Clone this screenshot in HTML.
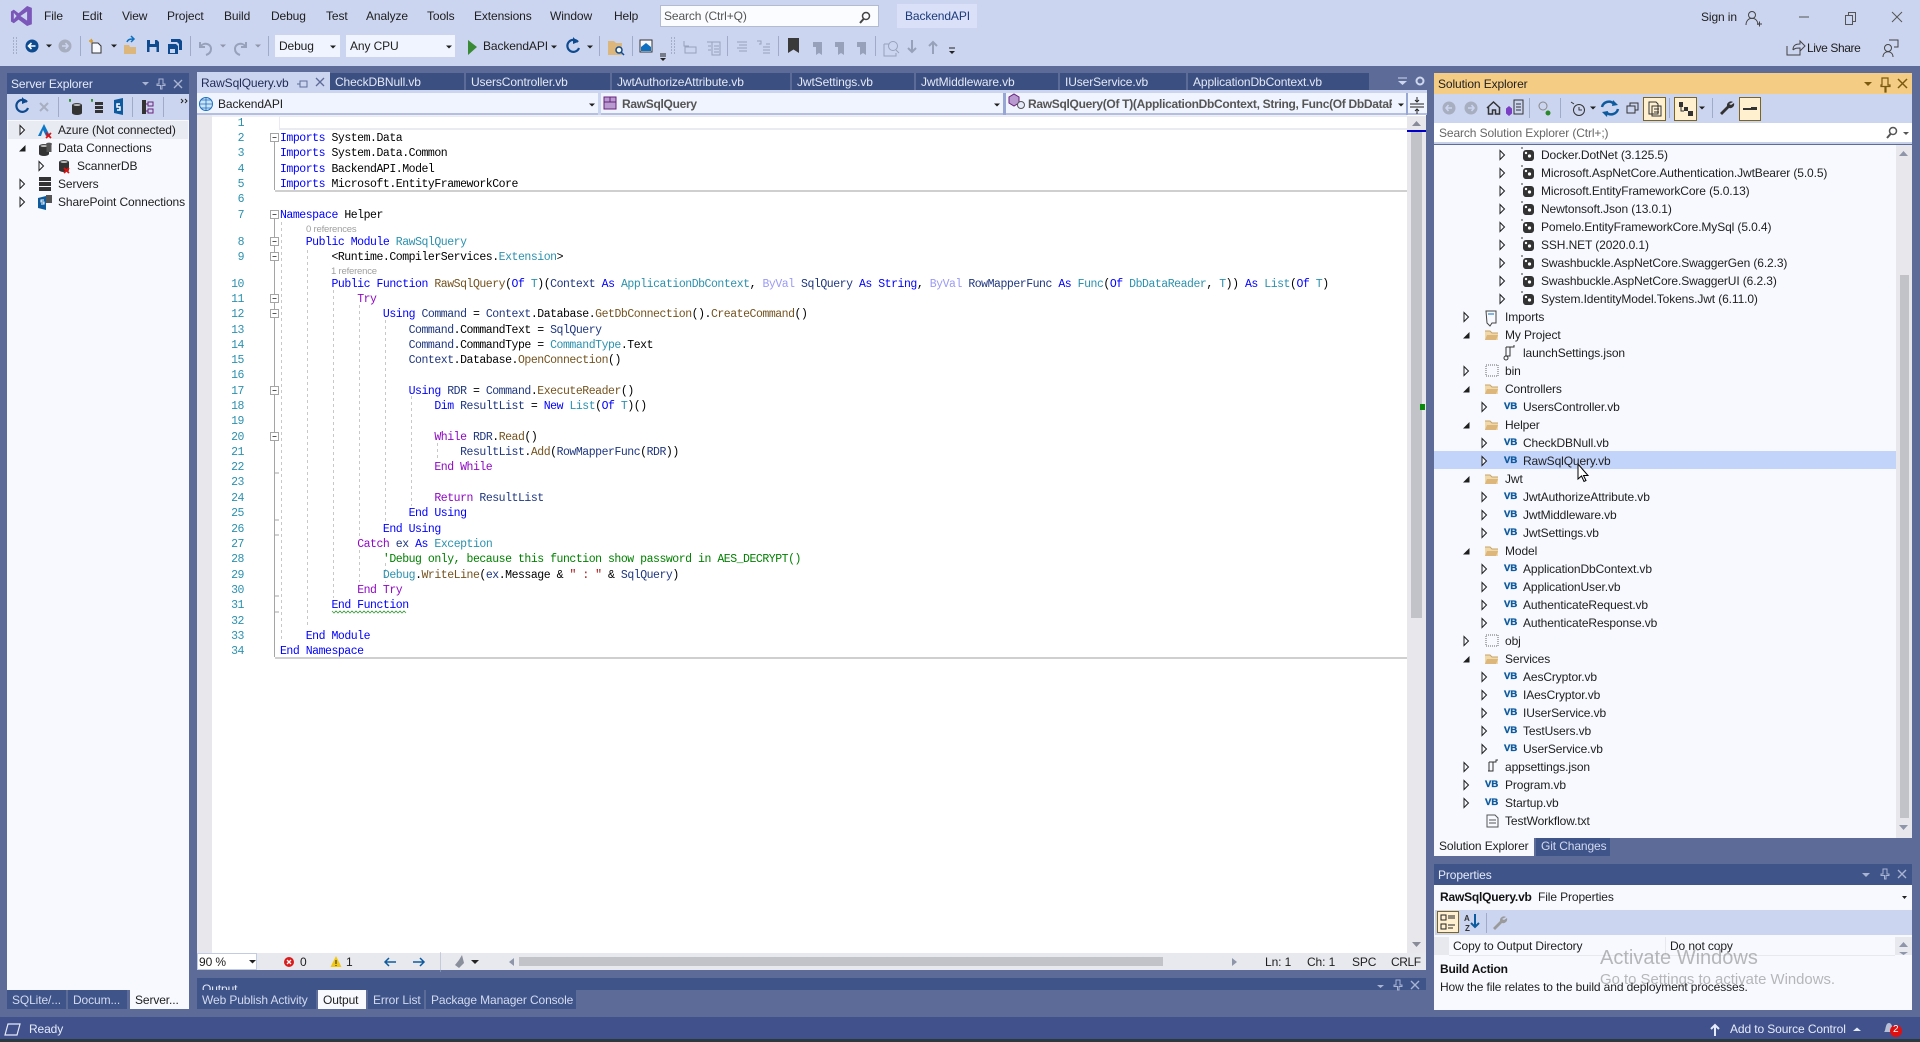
<!DOCTYPE html>
<html><head><meta charset="utf-8"><title>BackendAPI</title>
<style>
html,body{margin:0;padding:0;width:1920px;height:1042px;overflow:hidden;background:#5d6b99}
*{box-sizing:border-box}
body{font:12px/16px "Liberation Sans",sans-serif;letter-spacing:-.11px;color:#1e1e1e;position:relative}
.r{position:absolute}
.t{position:absolute;white-space:nowrap;line-height:16px}
.w{color:#e6ebfa}
.tab{position:absolute;top:73px;height:17px;background:#3b4f81;color:#e4e9f8;line-height:19px;padding-left:5px;white-space:nowrap;overflow:hidden}
.bt{position:absolute;top:990px;height:19px;background:#3f5489;color:#d3daf0;line-height:21px;padding-left:5px;white-space:nowrap;overflow:hidden}
.ln{position:absolute;width:47px;left:197px;text-align:right;font:11.5px/16px "Liberation Mono",monospace;letter-spacing:-.465px;color:#2b91af;margin-top:2px}
.c{position:absolute;left:280px;white-space:pre;font:11.5px/16px "Liberation Mono",monospace;letter-spacing:-.47px;color:#000;margin-top:2px}
.k{color:#00f}.p{color:#8f08c4}.v{color:#1f377f}.m{color:#74531f}.y{color:#2b91af}.g{color:#008000}.f{color:#9a9af5}.s{color:#a31515}
.ref{position:absolute;font-size:9.5px;line-height:12px;color:#a0a0a0;letter-spacing:-.2px;white-space:nowrap;margin-top:1px}
#tree{position:absolute;left:1434px;top:146px;width:462px;font-size:12px}
#tree div{height:18px;line-height:18px;white-space:nowrap}
.l2{padding-left:71px}.l3{padding-left:89px}.l4{padding-left:107px}
#srv{position:absolute;left:8px;top:121px;width:180px}
#srv div{height:18px;line-height:18px;white-space:nowrap;padding-left:50px}
svg{position:absolute;left:0;top:0}
</style></head><body>
<!-- chrome -->
<div class="r" style="left:0;top:0;width:1920px;height:66px;background:#ccd5f0"></div>
<!-- search + badge -->
<div class="r" style="left:660px;top:5px;width:219px;height:22px;background:#fbfcff;border:1px solid #b4bbd0"></div>
<div class="r" style="left:897px;top:4px;width:80px;height:24px;background:#d9e0f8"></div>
<div class="r" style="left:275px;top:35px;width:65px;height:22px;background:#f0f4fe"></div>
<div class="r" style="left:346px;top:35px;width:109px;height:22px;background:#f0f4fe"></div>
<!-- server explorer -->
<div class="r" style="left:7px;top:73px;width:182px;height:21px;background:#3f5489"></div>
<div class="r" style="left:7px;top:94px;width:182px;height:26px;background:#ccd5f0"></div>
<div class="r" style="left:7px;top:120px;width:182px;height:870px;background:#f7f9fe"></div>
<div class="r" style="left:8px;top:121px;width:180px;height:18px;background:#e9ebf2"></div>
<div class="bt" style="left:7px;width:59px">SQLite/...</div>
<div class="bt" style="left:68px;width:59px">Docum...</div>
<div class="bt" style="left:130px;width:59px;background:#f7f9fe;color:#1e1e1e">Server...</div>
<!-- editor -->
<div class="r" style="left:197px;top:90px;width:1230px;height:3px;background:#ccd5f0"></div>
<div class="r" style="left:197px;top:72px;width:133px;height:19px;background:#ccd5f0"></div>
<div class="tab" style="left:330px;width:134px">CheckDBNull.vb</div>
<div class="tab" style="left:466px;width:144px">UsersController.vb</div>
<div class="tab" style="left:612px;width:178px">JwtAuthorizeAttribute.vb</div>
<div class="tab" style="left:792px;width:122px">JwtSettings.vb</div>
<div class="tab" style="left:916px;width:142px">JwtMiddleware.vb</div>
<div class="tab" style="left:1060px;width:126px">IUserService.vb</div>
<div class="tab" style="left:1188px;width:181px">ApplicationDbContext.vb</div>
<div class="r" style="left:197px;top:93px;width:1230px;height:22px;background:#f0f4fe;border-bottom:2px solid #b3bee0"></div>
<div class="r" style="left:598px;top:93px;width:3px;height:22px;background:#ccd5f0"></div>
<div class="r" style="left:1003px;top:93px;width:3px;height:22px;background:#98a6d4"></div>
<div class="r" style="left:1406px;top:93px;width:2px;height:22px;background:#98a6d4"></div>
<div class="r" style="left:197px;top:115px;width:1229px;height:838px;background:#fff"></div>
<div class="r" style="left:197px;top:115px;width:15px;height:838px;background:#e8e8ec"></div>
<div class="r" style="left:212px;top:115px;width:1195px;height:2px;background:#eef0f6"></div>
<div class="r" style="left:279px;top:116px;width:1128px;height:14px;background:#fff;border-bottom:2px solid #eaeaf2;border-left:1px solid #eaeaf2;border-top:1px solid #eaeaf2"></div>
<div class="r" style="left:275px;top:190px;width:1132px;height:2px;background:#cfcfcf"></div>
<div class="r" style="left:275px;top:657px;width:1132px;height:2px;background:#cfcfcf"></div>
<!-- editor scrollbar -->
<div class="r" style="left:1407px;top:116px;width:19px;height:837px;background:#e8e8ec"></div>
<div class="r" style="left:1411px;top:132px;width:11px;height:486px;background:#c2c3c9"></div>
<div class="r" style="left:1407px;top:130px;width:19px;height:2px;background:#0000c8"></div>
<div class="r" style="left:1420px;top:404px;width:5px;height:6px;background:#0a8a0a"></div>
<!-- bottom editor strip -->
<div class="r" style="left:197px;top:953px;width:1229px;height:17px;background:#e8e9ee"></div>
<div class="r" style="left:197px;top:953px;width:60px;height:17px;background:#fff;border:1px solid #c3cbe3"></div>
<div class="r" style="left:519px;top:957px;width:644px;height:9px;background:#c2c3c9"></div>
<div class="r" style="left:197px;top:978px;width:1229px;height:12px;background:#3f5489;overflow:hidden"><span style="position:absolute;left:5px;top:3px;color:#e6ebfa">Output</span></div>
<div class="bt" style="left:197px;width:119px">Web Publish Activity</div>
<div class="bt" style="left:318px;width:48px;background:#f7f9fe;color:#1e1e1e">Output</div>
<div class="bt" style="left:368px;width:56px">Error List</div>
<div class="bt" style="left:426px;width:150px">Package Manager Console</div>
<!-- solution explorer -->
<div class="r" style="left:1434px;top:73px;width:478px;height:21px;background:#f5cc84"></div>
<div class="r" style="left:1434px;top:94px;width:478px;height:29px;background:#ccd5f0"></div>
<div class="r" style="left:1434px;top:123px;width:478px;height:21px;background:#fff;border-bottom:2px solid #c8d1ea"></div>
<div class="r" style="left:1434px;top:145px;width:478px;height:693px;background:#f7f9fe"></div>
<div class="r" style="left:1896px;top:145px;width:16px;height:693px;background:#e8e8ec"></div>
<div class="r" style="left:1900px;top:275px;width:9px;height:543px;background:#c2c3c9"></div>
<div class="r" style="left:1434px;top:451px;width:462px;height:18px;background:#c3d4fb"></div>
<div class="bt" style="left:1434px;width:100px;top:838px;height:18px;line-height:17px;background:#f7f9fe;color:#1e1e1e">Solution Explorer</div>
<div class="bt" style="left:1536px;width:74px;top:838px;height:18px;line-height:17px">Git Changes</div>
<!-- properties -->
<div class="r" style="left:1434px;top:864px;width:478px;height:21px;background:#3f5489"></div>
<div class="r" style="left:1434px;top:885px;width:478px;height:125px;background:#f7f9fe"></div>
<div class="r" style="left:1435px;top:910px;width:477px;height:25px;background:#ccd5f0"></div>
<div class="r" style="left:1434px;top:937px;width:15px;height:18px;background:#e8e9ee"></div>
<div class="r" style="left:1895px;top:937px;width:17px;height:18px;background:#e8e9ee"></div>
<div class="r" style="left:1449px;top:955px;width:446px;height:1px;background:#e8e9ee"></div>
<div class="r" style="left:1665px;top:937px;width:1px;height:18px;background:#e8e9ee"></div>
<!-- status -->
<div class="r" style="left:0;top:1017px;width:1920px;height:22px;background:#40518c"></div>
<div class="r" style="left:0;top:1039px;width:1920px;height:3px;background:#2a3a3c"></div>

<svg width="1920" height="1042" viewBox="0 0 1920 1042">
<defs>
<g id="tx"><path d="M0-4.500L4.500 0L0 4.500z" fill="#f7f9fe" stroke="#1e1e1e"/></g>
<g id="td"><path d="M-3 3.500H3.500V-3z" fill="#1e1e1e"/></g>
<g id="cr"><path d="M-3-1.500H3L0 1.500z" fill="#1e1e1e"/></g>
<g id="crg"><path d="M-3-1.500H3L0 1.500z" fill="#8f96aa"/></g>
<g id="pk"><rect x="-4" y="-5" width="11" height="11" rx="3" fill="#333"/><circle cx="-1" cy="-2" r="1.200" fill="#fff"/><circle cx="2.500" cy="1" r="1.600" fill="#fff"/><path d="M-6-7h2M-5-8v2" stroke="#555" stroke-width=".7"/></g>
<g id="fold"><rect x="-3.500" y="-3.500" width="8" height="8" fill="#fff" stroke="#a5a5a5"/><path d="M-1.500 .5h4" stroke="#555"/></g>
<g id="ofold"><path d="M-6-4h5l2 2h6v7h-13z" fill="#f0d8a8"/><path d="M-6 5l2-5h11l-2 5z" fill="#dcb67a"/><path d="M-6-4h5l2 2h6" fill="none" stroke="#c8a46a"/></g>
<g id="dbk"><ellipse cx="0" cy="-4" rx="5" ry="2" fill="#444"/><path d="M-5-4v8a5 2 0 0 0 10 0v-8" fill="#333"/><ellipse cx="0" cy="-4" rx="3.500" ry="1" fill="#bbb"/></g>
<g id="dis"><circle r="6.500" fill="#a7aec0"/><path d="M3-0H-3M-.5-3L-3 0L-.5 3" stroke="#ccd5f0" stroke-width="1.600" fill="none"/></g>
<g id="dis2"><circle r="6.500" fill="#a7aec0"/><path d="M-3 0H3M.5-3L3 0L.5 3" stroke="#ccd5f0" stroke-width="1.600" fill="none"/></g>
<g id="x"><path d="M-4-4L4 4M4-4L-4 4" stroke="#a9b4d2" stroke-width="1.400"/></g>
<g id="pin"><path d="M-2-5h4v5h2v1.500h-3V5H-.5V1.500H-4V0h2z" fill="none" stroke="#a9b4d2" stroke-width="1"/></g>
<g id="sep"><rect x="0" y="-10" width="1" height="20" fill="#9fabc9"/></g>
</defs>

<!-- VS logo -->
<path d="M28 11L19 19L14 15L11 17V28L14 30L19 26L28 33L33 31V13z M28 17V27L21 22z M14 18.500L17 22L14 25.500z" fill="#7a57b8" fill-rule="evenodd" transform="matrix(.95 0 0 .91 .5 -4)"/>
<!-- title search magnifier -->
<g transform="translate(865 18)" fill="none" stroke="#444" stroke-width="1.500"><circle cx="1" cy="-2" r="3.500"/><path d="M-1.500 1L-5 5" stroke-width="2"/></g>
<!-- win controls -->
<path d="M1799 17H1809" stroke="#555"/>
<path d="M1846 16h7v9h-7z M1849 16v-3h7v9h-3" transform="translate(-.5 -.5)" fill="none" stroke="#555"/>
<path d="M1892 12L1902 22M1902 12L1892 22" stroke="#555"/>
<circle cx="1752" cy="15" r="3.500" fill="none" stroke="#444"/><path d="M1746 25c0-9 12-9 12 0M1757 24h5M1759.500 21.500v5" fill="none" stroke="#444"/>
<!-- live share, feedback -->
<path d="M1787 46v9h13v-4M1793 50c0-5 3-6 7-6v-3l5 5-5 5v-3c-3 0-5 0-7 2" fill="none" stroke="#444"/>
<circle cx="1888" cy="48" r="3.500" fill="none" stroke="#444"/><path d="M1883 57c0-7 10-7 10 0M1889 40h9v7h-4" fill="none" stroke="#444"/>

<!-- toolbar -->
<g transform="translate(14 46)" fill="#7d86a3"><path d="M-1-8h1M2-8h1M-1-5h1M2-5h1M-1-2h1M2-2h1M-1 1h1M2 1h1M-1 4h1M2 4h1M-1 7h1M2 7h1" stroke="#7d86a3"/></g>
<circle cx="32" cy="46" r="6.500" fill="#0e4a8f"/><path d="M35.500 46H29M31.500 43L28.500 46L31.500 49" stroke="#fff" stroke-width="1.600" fill="none"/>
<use href="#cr" x="49" y="46"/>
<use href="#dis2" x="65" y="46"/>
<use href="#sep" x="80" y="46"/>
<g transform="translate(96 46)"><path d="M-4-3h6l3 3v7h-9z" fill="#f7f9fe" stroke="#333"/><path d="M-5-7l1 2-1 2M-7-5h4" stroke="#d99b2b" stroke-width="1.500" fill="none"/></g>
<use href="#cr" x="114" y="46"/>
<g transform="translate(130 46)"><path d="M-6-1h5l1 2h6v7h-12z" fill="#dcb67a"/><path d="M-3-4c1-3 4-3 6-3M1-10l3 3-3 3" stroke="#0e70c0" stroke-width="1.500" fill="none"/></g>
<path d="M147 40h10l2 2v10h-12z" fill="#0e4a8f"/><rect x="150" y="40" width="5" height="4" fill="#ccd5f0"/><rect x="149.500" y="47" width="7" height="5" fill="#ccd5f0"/>
<path d="M168 44h8l2 2v8h-10z M171 39h9l2 2v9h-3v-6l-2-2h-6z" fill="#0e4a8f"/><rect x="170" y="49" width="5" height="4" fill="#ccd5f0"/>
<use href="#sep" x="190" y="46"/>
<path d="M200 42v5h5M200 47c3-5 11-4 11 2c0 3-2 5-5 6" fill="none" stroke="#98a1ba" stroke-width="2"/>
<use href="#crg" x="223" y="46"/>
<path d="M246 42v5h-5M246 47c-3-5-11-4-11 2c0 3 2 5 5 6" fill="none" stroke="#98a1ba" stroke-width="2"/>
<use href="#crg" x="258" y="46"/>
<use href="#sep" x="268" y="46"/>
<use href="#cr" x="333" y="47"/><use href="#cr" x="449" y="47"/>
<path d="M468 40L477 47L468 55z" fill="#388a34"/>
<use href="#cr" x="554" y="47"/>
<path d="M578 42a6 6 0 1 0 1 6" fill="none" stroke="#0e4a8f" stroke-width="2.200"/><path d="M573 37l5 5-5 2z" fill="#0e4a8f"/>
<use href="#cr" x="590" y="47"/>
<use href="#sep" x="599" y="46"/>
<path d="M608 41h6l2 2h6v12h-14z" fill="#dcb67a"/><circle cx="619" cy="50" r="3" fill="#f7f9fe" stroke="#0e4a8f" stroke-width="1.500"/><path d="M621 52l3 3" stroke="#0e4a8f" stroke-width="1.500"/>
<use href="#sep" x="632" y="46"/>
<rect x="640" y="40" width="12" height="12" fill="#f7f9fe" stroke="#333"/><path d="M641 47l5-4 5 4v4h-10z" fill="#0e70c0"/>
<path d="M660 54h6M660 56h6" stroke="#222"/><path d="M660 58h6l-3 3z" fill="#222"/>
<path d="M671 38h1M674 38h1M671 41h1M674 41h1M671 44h1M674 44h1M671 47h1M674 47h1M671 50h1M674 50h1M671 53h1M674 53h1" stroke="#7d86a3"/>
<g fill="none" stroke="#98a1ba"><path d="M684 41v5h5M685 47h11v6h-11z"/><path d="M707 42h13v13h-8v-13M708 46h3M708 50h3M714 46h5M714 49h5M714 52h5"/></g>
<use href="#sep" x="727" y="46"/>
<path d="M737 42h10M739 45h8M737 48h10M739 51h8" stroke="#98a1ba"/><path d="M757 41h4v3h-2M766 44h4M763 47h7M763 50h7M763 53h7" stroke="#98a1ba" fill="none"/>
<use href="#sep" x="778" y="46"/>
<path d="M788 38h11v15l-5.500-3.500L788 53z" fill="#3a3a3a"/>
<g fill="#98a1ba"><path d="M813 42h9v13l-3-2-3 2v-8h-3z"/><path d="M835 42h9v13l-3-2-3 2v-8h-3z"/><path d="M857 42h9v13l-3-2-3 2v-8h-3z"/></g>
<use href="#sep" x="875" y="46"/>
<g fill="none" stroke="#98a1ba"><path d="M884 44h5M884 44v12h12v-3"/><circle cx="893" cy="46" r="4.500"/><path d="M896 50l3 3"/></g>
<path d="M912 40v12M908 48l4 4 4-4" stroke="#98a1ba" stroke-width="2" fill="none"/><path d="M933 54v-12M929 46l4-4 4 4" stroke="#98a1ba" stroke-width="2" fill="none"/>
<path d="M949 48h6" stroke="#222"/><path d="M949 51h6l-3 3z" fill="#222"/>

<!-- server explorer title icons -->
<path d="M142 82h7l-3.500 3.500z" fill="#a9b4d2"/>
<use href="#pin" x="161" y="84"/><use href="#x" x="178" y="84"/>
<!-- server toolbar -->
<path d="M27 102a6 6 0 1 0 1 6" fill="none" stroke="#0e4a8f" stroke-width="2.200"/><path d="M22 97l5 5-5 2z" fill="#0e4a8f"/>
<path d="M40 103l8 8M48 103l-8 8" stroke="#a7aec0" stroke-width="2"/>
<use href="#sep" x="58" y="107"/>
<path d="M69 100h2M70 99v3" stroke="#2a8a2a" stroke-width="1.400"/>
<use href="#dbk" x="77" y="109"/>
<path d="M91 100h2M92 99v3" stroke="#2a8a2a" stroke-width="1.400"/>
<g fill="#333"><rect x="95" y="102" width="8" height="3"/><rect x="95" y="106" width="8" height="3"/><rect x="95" y="110" width="8" height="3"/></g>
<path d="M114 100l9-2v17l-9-2z" fill="#0e5a9e"/><path d="M120 104h-3v3h3v3h-3" stroke="#fff" fill="none" stroke-width="1.500"/>
<use href="#sep" x="132" y="107"/>
<path d="M142 100h4v14h-4z" fill="#333"/><path d="M148 102h5v4h-5zM148 109h5v4h-5zM146 104h2M146 111h2" fill="none" stroke="#68217a"/>
<use href="#sep" x="163" y="107"/>
<path d="M181 99l2 2-2 2M185 99l2 2-2 2" stroke="#222" fill="none"/>
<!-- server tree -->
<use href="#tx" x="20" y="130"/><use href="#td" x="22" y="148"/><use href="#tx" x="39" y="166"/><use href="#tx" x="20" y="184"/><use href="#tx" x="20" y="202"/>
<path d="M38 136L44 124L50 136H46L43 130L41 136z" fill="#0e78c8"/><path d="M46 133l5 5M51 133l-5 5" stroke="#e01010" stroke-width="1.700"/>
<use href="#dbk" x="44" y="150"/><ellipse cx="49" cy="144" rx="3" ry="1.400" fill="#555"/><path d="M49 144v8" stroke="#555" stroke-width="5"/>
<use href="#dbk" x="64" y="166"/><path d="M64 168l5 5M69 168l-5 5" stroke="#e01010" stroke-width="1.700"/>
<g fill="#333"><rect x="39" y="177" width="12" height="4"/><rect x="39" y="182" width="12" height="4"/><rect x="39" y="187" width="12" height="4"/></g>
<path d="M38 198l8-2v14l-8-2z" fill="#0e5a9e"/><rect x="46" y="195" width="6" height="8" fill="#555"/><path d="M44 200h-3v2h3v2h-3" stroke="#fff" fill="none"/>

<!-- editor active tab -->
<path d="M297 84h3M300 81v6h7v-6z" stroke="#5d6b99" fill="none"/>
<path d="M316 78l8 8M324 78l-8 8" stroke="#5d6b99" stroke-width="1.300"/>
<path d="M1398 81h9l-4.500 4z" fill="#cfd7ee"/><path d="M1398 78h9" stroke="#cfd7ee"/>
<circle cx="1420" cy="81" r="3.500" fill="none" stroke="#cfd7ee" stroke-width="2"/>
<!-- nav bar icons -->
<circle cx="206" cy="104" r="6.500" fill="#cde4f8" stroke="#1a6ec0"/><path d="M199.500 104h13M206 97.500v13M201 100h10M201 108h10" stroke="#1a6ec0" stroke-width=".8"/>
<rect x="604" y="97" width="12" height="12" fill="#b89ad0" stroke="#68217a"/><path d="M604 102h12M610 97v5" stroke="#68217a"/>
<path d="M1009 97l5-3 5 3v6l-5 3-5-3z" fill="#b89ad0" stroke="#68217a"/><circle cx="1021" cy="105" r="3.500" fill="#e6ebfa" stroke="#555"/>
<use href="#cr" x="592" y="105"/><use href="#cr" x="997" y="105"/><use href="#cr" x="1401" y="105"/>
<path d="M1410 104h14M1410 107h14M1417 97v5M1417 109v5M1415 100l2 2 2-2M1415 111l2-2 2 2" stroke="#222" fill="none"/>
<!-- scroll arrows -->
<path d="M1412 126l4.500-5 4.500 5z" fill="#888c99"/><path d="M1412 942l4.500 5 4.500-5z" fill="#888c99"/>
<!-- fold + guides -->
<g fill="none" stroke="#a5a5a5"><path d="M274.500 142V190M274.500 218V238M274.500 246V253M274.500 261V295M274.500 303V310M274.500 318V387M274.500 395V433M274.500 441V657"/>
<path d="M275 473h4M275 520h4M275 535h4M275 596h4M275 612h4"/></g>
<g fill="none" stroke="#c8c8c8" stroke-dasharray="3 3"><path d="M281.500 222V642"/><path d="M307.500 250V628"/><path d="M333.500 290V598"/><path d="M359.500 305V536M359.500 550V582"/><path d="M385.500 320V522M385.500 563V582"/><path d="M411.500 396V506"/><path d="M437.500 443V460"/></g>
<use href="#fold" x="274" y="137"/><use href="#fold" x="274" y="214"/><use href="#fold" x="274" y="241"/><use href="#fold" x="274" y="256"/><use href="#fold" x="274" y="298"/><use href="#fold" x="274" y="313"/><use href="#fold" x="274" y="390"/><use href="#fold" x="274" y="436"/>
<path d="M332 611l2 2 2-2 2 2 2-2 2 2 2-2 2 2 2-2 2 2 2-2 2 2 2-2 2 2 2-2 2 2 2-2 2 2 2-2 2 2 2-2 2 2 2-2 2 2 2-2 2 2 2-2 2 2 2-2 2 2 2-2 2 2 2-2 2 2 2-2 2 2 2-2 2 2" fill="none" stroke="#3a9a3a" stroke-width=".8"/>
<!-- editor bottom -->
<path d="M249 960h7l-3.500 3.500z" fill="#222"/>
<circle cx="289" cy="962" r="5" fill="#d91b1b"/><path d="M287 960l4 4M291 960l-4 4" stroke="#fff" stroke-width="1.300"/>
<path d="M336 956l5.500 11h-11z" fill="#f2c811"/><path d="M336 960v4M336 965v1" stroke="#222"/>
<path d="M396 962h-11M389 958l-4 4 4 4" stroke="#0e5a9e" stroke-width="1.500" fill="none"/>
<path d="M413 962h11M420 958l4 4-4 4" stroke="#0e5a9e" stroke-width="1.500" fill="none"/>
<use href="#sep" x="440" y="962" opacity=".5"/>
<path d="M462 955l-3 5-4 5 4 3 5-5z" fill="#8a8f9c"/><path d="M471 960h8l-4 4z" fill="#222"/>
<path d="M514 958l-5 4 5 4z" fill="#8f96aa"/><path d="M1232 958l5 4-5 4z" fill="#8f96aa"/>
<!-- output title icons -->
<path d="M1377 985h7l-3.500 3z" fill="#a9b4d2"/><use href="#pin" x="1398" y="985"/><use href="#x" x="1415" y="985"/>
<!-- solution explorer title icons -->
<path d="M1864 82h8l-4 4z" fill="#7a5a10"/>
<path d="M1882 78h6v7h2v1.500h-4V92h-1v-5.500h-4V85h1z" fill="none" stroke="#7a5a10" stroke-width="1.200"/>
<path d="M1898 79l9 9M1907 79l-9 9" stroke="#7a5a10" stroke-width="1.500"/>
<!-- solution toolbar -->
<use href="#dis" x="1449" y="108"/><use href="#dis2" x="1471" y="108"/>
<path d="M1487 108l6.500-6 6.500 6M1488.500 107v7h4v-4h3v4h4v-7" fill="none" stroke="#333" stroke-width="1.500"/>
<path d="M1509 106l3 2.500v5l-3 2.500-3-2.500v-5z" fill="#7a3fc4"/><path d="M1514 100h9v14h-9z M1516 104h5M1516 107h5M1516 110h5" fill="none" stroke="#333"/>
<use href="#sep" x="1529" y="108"/>
<circle cx="1543" cy="106" r="4" fill="none" stroke="#888"/><circle cx="1548" cy="113" r="2.500" fill="#2a8a2a"/>
<use href="#sep" x="1560" y="108"/>
<circle cx="1579" cy="110" r="5.500" fill="none" stroke="#333"/><path d="M1579 107v3h3M1571 102l3 2" stroke="#333" fill="none"/>
<use href="#cr" x="1593" y="108"/>
<path d="M1602 107a7 7 0 0 1 12-3M1618 109a7 7 0 0 1-12 3" fill="none" stroke="#0e5a9e" stroke-width="2.500"/><path d="M1613 100l5 5-6 1zM1607 117l-5-5 6-1z" fill="#0e5a9e"/>
<path d="M1627 106h8v7h-8zM1630 106v-3h8v7h-3" fill="none" stroke="#333"/>
<rect x="1643.500" y="97.500" width="22" height="23" fill="#fff0d0" stroke="#7d6420"/><path d="M1649 102h7l2 2v10h-9zM1652 106h9v10h-9zM1654 109h5M1654 112h5" fill="#fff0d0" stroke="#333"/>
<use href="#sep" x="1669" y="108"/>
<rect x="1674.500" y="97.500" width="22" height="23" fill="#fff0d0" stroke="#7d6420"/><path d="M1679 102h4v5h-4zM1684 107h4v4h-4z" fill="#333"/><rect x="1688" y="111" width="5" height="5" fill="#333"/><path d="M1681 107v4h3" stroke="#333" fill="none"/>
<use href="#cr" x="1702" y="108"/>
<use href="#sep" x="1712" y="108"/>
<path d="M1733 102a4 4 0 0 0-6 4l-7 7 2 2 7-7a4 4 0 0 0 5-5l-3 2-2-1z" fill="#333"/>
<rect x="1739.500" y="97.500" width="21" height="23" fill="#fff0d0" stroke="#7d6420"/><path d="M1743 110h14v-3h-6v1h-8z" fill="#333"/>
<g transform="translate(1892 133)" fill="none" stroke="#555" stroke-width="1.500"><circle cx="1" cy="-2" r="3.500"/><path d="M-1.500 1L-5 5" stroke-width="2"/></g>
<path d="M1903 132h6l-3 3z" fill="#555"/>
<!-- tree icons -->
<path d="M1899 156l4.500-5 4.500 5z" fill="#8f96aa"/><path d="M1899 825l4.500 5 4.500-5z" fill="#8f96aa"/>
<use href="#tx" x="1500" y="155"/><use href="#tx" x="1500" y="173"/><use href="#tx" x="1500" y="191"/><use href="#tx" x="1500" y="209"/><use href="#tx" x="1500" y="227"/><use href="#tx" x="1500" y="245"/><use href="#tx" x="1500" y="263"/><use href="#tx" x="1500" y="281"/><use href="#tx" x="1500" y="299"/>
<use href="#pk" x="1527" y="155"/><use href="#pk" x="1527" y="173"/><use href="#pk" x="1527" y="191"/><use href="#pk" x="1527" y="209"/><use href="#pk" x="1527" y="227"/><use href="#pk" x="1527" y="245"/><use href="#pk" x="1527" y="263"/><use href="#pk" x="1527" y="281"/><use href="#pk" x="1527" y="299"/>
<use href="#tx" x="1464" y="317"/><path d="M1486 311h10v12h-4l-2 3-3-3z" fill="#f7f9fe" stroke="#444"/><path d="M1488 314h6" stroke="#0e70c0"/>
<use href="#td" x="1466" y="335"/><use href="#ofold" x="1491" y="335"/>
<path d="M1506 347h8v-2M1506 347v9h-1M1510 347v9h-4" fill="none" stroke="#333"/><circle cx="1506" cy="358" r="2" fill="none" stroke="#333"/>
<use href="#tx" x="1464" y="371"/><rect x="1486" y="365" width="12" height="11" fill="#f7f9fe" stroke="#666" stroke-dasharray="1 1"/>
<use href="#td" x="1466" y="389"/><use href="#ofold" x="1491" y="389"/>
<use href="#tx" x="1482" y="407"/>
<use href="#td" x="1466" y="425"/><use href="#ofold" x="1491" y="425"/>
<use href="#tx" x="1482" y="443"/><use href="#tx" x="1482" y="461"/>
<use href="#td" x="1466" y="479"/><use href="#ofold" x="1491" y="479"/>
<use href="#tx" x="1482" y="497"/><use href="#tx" x="1482" y="515"/><use href="#tx" x="1482" y="533"/>
<use href="#td" x="1466" y="551"/><use href="#ofold" x="1491" y="551"/>
<use href="#tx" x="1482" y="569"/><use href="#tx" x="1482" y="587"/><use href="#tx" x="1482" y="605"/><use href="#tx" x="1482" y="623"/>
<use href="#tx" x="1464" y="641"/><rect x="1486" y="635" width="12" height="11" fill="#f7f9fe" stroke="#666" stroke-dasharray="1 1"/>
<use href="#td" x="1466" y="659"/><use href="#ofold" x="1491" y="659"/>
<use href="#tx" x="1482" y="677"/><use href="#tx" x="1482" y="695"/><use href="#tx" x="1482" y="713"/><use href="#tx" x="1482" y="731"/><use href="#tx" x="1482" y="749"/>
<use href="#tx" x="1464" y="767"/><path d="M1489 762h7v-2h2M1489 762v9h-1M1493 762v9h-4" fill="none" stroke="#333"/>
<use href="#tx" x="1464" y="785"/><use href="#tx" x="1464" y="803"/>
<path d="M1487 815h8l3 3v9h-11z M1489 820h7M1489 823h7" fill="#f7f9fe" stroke="#555"/>
<!-- cursor -->
<path d="M1578 464v15l3.500-3 2.500 5.500 2-1-2.500-5h4.500z" fill="#fff" stroke="#000"/>
<!-- properties icons -->
<path d="M1862 873h8l-4 4z" fill="#a9b4d2"/><use href="#pin" x="1885" y="874"/><use href="#x" x="1902" y="874"/>
<path d="M1903 897h5l-2.500 3z" fill="#222" transform="translate(-1 -1)"/>
<rect x="1437.500" y="911.500" width="21" height="21" fill="#fff0d0" stroke="#7d6420"/>
<path d="M1441 915h5v5h-5zM1441 924h5v5h-5zM1448 916h7M1448 918h7M1448 925h7M1448 928h5" fill="none" stroke="#222"/>
<text x="1464" y="921" font-family="Liberation Sans" font-size="8" font-weight="bold" fill="#333">A</text><text x="1465" y="931" font-family="Liberation Sans" font-size="8" font-weight="bold" fill="#333">Z</text>
<path d="M1475 914v13M1471 923l4 4 4-4" stroke="#0e5a9e" stroke-width="2" fill="none"/>
<rect x="1486" y="913" width="1" height="20" fill="#9fabc9"/>
<path d="M1506 917a4 4 0 0 0-6 4l-7 7 2 2 7-7a4 4 0 0 0 5-5l-3 2-2-1z" fill="#9a9a9a"/>
<path d="M1899 947h9l-4.500-5zM1899 949h9M1899 952h9l-4.500 3z" fill="#8f96aa"/>
<!-- status icons -->
<path d="M5 1035l3-11h12l-3 11z" fill="none" stroke="#e6ebfa" stroke-width="1.200"/>
<path d="M1715 1036v-11M1711 1029l4-4 4 4" stroke="#e6ebfa" stroke-width="2" fill="none"/>
<path d="M1853 1031l4-3.500 4 3.500z" fill="#e6ebfa"/>
<path d="M1884 1032c2-1 1-9 5-9 4 0 3 8 5 9z" fill="#b8c0d8"/>
<circle cx="1896" cy="1031" r="6" fill="#e01010"/>
</svg>

<!-- menu -->
<div class="t" style="left:44px;top:8px">File</div>
<div class="t" style="left:82px;top:8px">Edit</div>
<div class="t" style="left:122px;top:8px">View</div>
<div class="t" style="left:167px;top:8px">Project</div>
<div class="t" style="left:224px;top:8px">Build</div>
<div class="t" style="left:271px;top:8px">Debug</div>
<div class="t" style="left:326px;top:8px">Test</div>
<div class="t" style="left:366px;top:8px">Analyze</div>
<div class="t" style="left:427px;top:8px">Tools</div>
<div class="t" style="left:474px;top:8px">Extensions</div>
<div class="t" style="left:550px;top:8px">Window</div>
<div class="t" style="left:614px;top:8px">Help</div>
<div class="t" style="left:664px;top:8px;color:#555">Search (Ctrl+Q)</div>
<div class="t" style="left:905px;top:8px;color:#1d3a7a">BackendAPI</div>
<div class="t" style="left:1701px;top:9px">Sign in</div>
<div class="t" style="left:1807px;top:40px;letter-spacing:-.4px">Live Share</div>
<div class="t" style="left:279px;top:38px">Debug</div>
<div class="t" style="left:350px;top:38px">Any CPU</div>
<div class="t" style="left:483px;top:38px">BackendAPI</div>

<div class="t w" style="left:11px;top:76px">Server Explorer</div>
<div id="srv">
<div>Azure (Not connected)</div>
<div>Data Connections</div>
<div style="padding-left:69px">ScannerDB</div>
<div>Servers</div>
<div>SharePoint Connections</div>
</div>

<div class="t" style="left:201px;top:75px;color:#1e2a55">RawSqlQuery.vb</div>
<div class="t" style="left:218px;top:96px">BackendAPI</div>
<div class="t" style="left:622px;top:96px;color:#555;font-weight:bold;letter-spacing:-.3px">RawSqlQuery</div>
<div class="t" style="left:1028px;top:96px;width:364px;overflow:hidden;color:#555;font-weight:bold;letter-spacing:-.3px">RawSqlQuery(Of T)(ApplicationDbContext, String, Func(Of DbDataReader, T))</div>

<!-- line numbers -->
<div class="ln" style="top:114px">1</div><div class="ln" style="top:129px">2</div><div class="ln" style="top:144px">3</div><div class="ln" style="top:160px">4</div><div class="ln" style="top:175px">5</div><div class="ln" style="top:190px">6</div><div class="ln" style="top:206px">7</div><div class="ln" style="top:233px">8</div><div class="ln" style="top:248px">9</div><div class="ln" style="top:275px">10</div><div class="ln" style="top:290px">11</div><div class="ln" style="top:305px">12</div><div class="ln" style="top:321px">13</div><div class="ln" style="top:336px">14</div><div class="ln" style="top:351px">15</div><div class="ln" style="top:366px">16</div><div class="ln" style="top:382px">17</div><div class="ln" style="top:397px">18</div><div class="ln" style="top:412px">19</div><div class="ln" style="top:428px">20</div><div class="ln" style="top:443px">21</div><div class="ln" style="top:458px">22</div><div class="ln" style="top:473px">23</div><div class="ln" style="top:489px">24</div><div class="ln" style="top:504px">25</div><div class="ln" style="top:520px">26</div><div class="ln" style="top:535px">27</div><div class="ln" style="top:550px">28</div><div class="ln" style="top:566px">29</div><div class="ln" style="top:581px">30</div><div class="ln" style="top:596px">31</div><div class="ln" style="top:612px">32</div><div class="ln" style="top:627px">33</div><div class="ln" style="top:642px">34</div>

<!-- code -->
<div class="c" style="top:129px"><span class="k">Imports</span> System.Data</div>
<div class="c" style="top:144px"><span class="k">Imports</span> System.Data.Common</div>
<div class="c" style="top:160px"><span class="k">Imports</span> BackendAPI.Model</div>
<div class="c" style="top:175px"><span class="k">Imports</span> Microsoft.EntityFrameworkCore</div>
<div class="c" style="top:206px"><span class="k">Namespace</span> Helper</div>
<div class="ref" style="left:306px;top:223px">0 references</div>
<div class="c" style="top:233px">    <span class="k">Public Module</span> <span class="y">RawSqlQuery</span></div>
<div class="c" style="top:248px">        &lt;Runtime.CompilerServices.<span class="y">Extension</span>&gt;</div>
<div class="ref" style="left:331px;top:265px">1 reference</div>
<div class="c" style="top:275px">        <span class="k">Public Function</span> <span class="m">RawSqlQuery</span>(<span class="k">Of</span> <span class="y">T</span>)(<span class="v">Context</span> <span class="k">As</span> <span class="y">ApplicationDbContext</span>, <span class="f">ByVal</span> <span class="v">SqlQuery</span> <span class="k">As</span> <span class="k">String</span>, <span class="f">ByVal</span> <span class="v">RowMapperFunc</span> <span class="k">As</span> <span class="y">Func</span>(<span class="k">Of</span> <span class="y">DbDataReader</span>, <span class="y">T</span>)) <span class="k">As</span> <span class="y">List</span>(<span class="k">Of</span> <span class="y">T</span>)</div>
<div class="c" style="top:290px">            <span class="p">Try</span></div>
<div class="c" style="top:305px">                <span class="k">Using</span> <span class="v">Command</span> = <span class="v">Context</span>.Database.<span class="m">GetDbConnection</span>().<span class="m">CreateCommand</span>()</div>
<div class="c" style="top:321px">                    <span class="v">Command</span>.CommandText = <span class="v">SqlQuery</span></div>
<div class="c" style="top:336px">                    <span class="v">Command</span>.CommandType = <span class="y">CommandType</span>.Text</div>
<div class="c" style="top:351px">                    <span class="v">Context</span>.Database.<span class="m">OpenConnection</span>()</div>
<div class="c" style="top:382px">                    <span class="k">Using</span> <span class="v">RDR</span> = <span class="v">Command</span>.<span class="m">ExecuteReader</span>()</div>
<div class="c" style="top:397px">                        <span class="k">Dim</span> <span class="v">ResultList</span> = <span class="k">New</span> <span class="y">List</span>(<span class="k">Of</span> <span class="y">T</span>)()</div>
<div class="c" style="top:428px">                        <span class="p">While</span> <span class="v">RDR</span>.<span class="m">Read</span>()</div>
<div class="c" style="top:443px">                            <span class="v">ResultList</span>.<span class="m">Add</span>(<span class="v">RowMapperFunc</span>(<span class="v">RDR</span>))</div>
<div class="c" style="top:458px">                        <span class="p">End While</span></div>
<div class="c" style="top:489px">                        <span class="p">Return</span> <span class="v">ResultList</span></div>
<div class="c" style="top:504px">                    <span class="k">End Using</span></div>
<div class="c" style="top:520px">                <span class="k">End Using</span></div>
<div class="c" style="top:535px">            <span class="p">Catch</span> <span class="v">ex</span> <span class="k">As</span> <span class="y">Exception</span></div>
<div class="c" style="top:550px">                <span class="g">'Debug only, because this function show password in AES_DECRYPT()</span></div>
<div class="c" style="top:566px">                <span class="y">Debug</span>.<span class="m">WriteLine</span>(<span class="v">ex</span>.Message &amp; <span class="s">" : "</span> &amp; <span class="v">SqlQuery</span>)</div>
<div class="c" style="top:581px">            <span class="p">End Try</span></div>
<div class="c" style="top:596px">        <span class="k">End Function</span></div>
<div class="c" style="top:627px">    <span class="k">End Module</span></div>
<div class="c" style="top:642px"><span class="k">End Namespace</span></div>

<!-- editor status -->
<div class="t" style="left:199px;top:954px">90 %</div>
<div class="t" style="left:300px;top:954px">0</div>
<div class="t" style="left:346px;top:954px">1</div>
<div class="t" style="left:1265px;top:954px">Ln: 1</div>
<div class="t" style="left:1307px;top:954px">Ch: 1</div>
<div class="t" style="left:1352px;top:954px">SPC</div>
<div class="t" style="left:1391px;top:954px;letter-spacing:-.4px">CRLF</div>

<!-- solution explorer -->
<div class="t" style="left:1438px;top:76px">Solution Explorer</div>
<div class="t" style="left:1439px;top:125px;color:#666">Search Solution Explorer (Ctrl+;)</div>
<div id="tree">
<div class="l4">Docker.DotNet (3.125.5)</div>
<div class="l4">Microsoft.AspNetCore.Authentication.JwtBearer (5.0.5)</div>
<div class="l4">Microsoft.EntityFrameworkCore (5.0.13)</div>
<div class="l4">Newtonsoft.Json (13.0.1)</div>
<div class="l4">Pomelo.EntityFrameworkCore.MySql (5.0.4)</div>
<div class="l4">SSH.NET (2020.0.1)</div>
<div class="l4">Swashbuckle.AspNetCore.SwaggerGen (6.2.3)</div>
<div class="l4">Swashbuckle.AspNetCore.SwaggerUI (6.2.3)</div>
<div class="l4">System.IdentityModel.Tokens.Jwt (6.11.0)</div>
<div class="l2">Imports</div>
<div class="l2">My Project</div>
<div class="l3">launchSettings.json</div>
<div class="l2">bin</div>
<div class="l2">Controllers</div>
<div class="l3">UsersController.vb</div>
<div class="l2">Helper</div>
<div class="l3">CheckDBNull.vb</div>
<div class="l3">RawSqlQuery.vb</div>
<div class="l2">Jwt</div>
<div class="l3">JwtAuthorizeAttribute.vb</div>
<div class="l3">JwtMiddleware.vb</div>
<div class="l3">JwtSettings.vb</div>
<div class="l2">Model</div>
<div class="l3">ApplicationDbContext.vb</div>
<div class="l3">ApplicationUser.vb</div>
<div class="l3">AuthenticateRequest.vb</div>
<div class="l3">AuthenticateResponse.vb</div>
<div class="l2">obj</div>
<div class="l2">Services</div>
<div class="l3">AesCryptor.vb</div>
<div class="l3">IAesCryptor.vb</div>
<div class="l3">IUserService.vb</div>
<div class="l3">TestUsers.vb</div>
<div class="l3">UserService.vb</div>
<div class="l2">appsettings.json</div>
<div class="l2">Program.vb</div>
<div class="l2">Startup.vb</div>
<div class="l2">TestWorkflow.txt</div>
</div>
<!-- VB badges -->
<div style="position:absolute;left:0;top:0;font:bold 9.500px/12px 'Liberation Sans',sans-serif;letter-spacing:0;color:#0e5a9e;-webkit-text-stroke:.35px #0e5a9e">
<span class="r" style="left:1504px;top:401px">VB</span>
<span class="r" style="left:1504px;top:437px">VB</span>
<span class="r" style="left:1504px;top:455px">VB</span>
<span class="r" style="left:1504px;top:491px">VB</span>
<span class="r" style="left:1504px;top:509px">VB</span>
<span class="r" style="left:1504px;top:527px">VB</span>
<span class="r" style="left:1504px;top:563px">VB</span>
<span class="r" style="left:1504px;top:581px">VB</span>
<span class="r" style="left:1504px;top:599px">VB</span>
<span class="r" style="left:1504px;top:617px">VB</span>
<span class="r" style="left:1504px;top:671px">VB</span>
<span class="r" style="left:1504px;top:689px">VB</span>
<span class="r" style="left:1504px;top:707px">VB</span>
<span class="r" style="left:1504px;top:725px">VB</span>
<span class="r" style="left:1504px;top:743px">VB</span>
<span class="r" style="left:1485px;top:779px">VB</span>
<span class="r" style="left:1485px;top:797px">VB</span>
</div>

<!-- properties -->
<div class="t w" style="left:1438px;top:867px">Properties</div>
<div class="t" style="left:1440px;top:889px;font-weight:bold;color:#111;letter-spacing:-.2px">RawSqlQuery.vb</div>
<div class="t" style="left:1538px;top:889px">File Properties</div>
<div class="t" style="left:1453px;top:938px">Copy to Output Directory</div>
<div class="t" style="left:1670px;top:938px">Do not copy</div>
<div class="t" style="left:1440px;top:961px;font-weight:bold;color:#111;letter-spacing:-.2px">Build Action</div>
<div class="t" style="left:1440px;top:979px">How the file relates to the build and deployment processes.</div>
<div class="t" style="left:1600px;top:947px;font-size:20px;line-height:22px;letter-spacing:0;color:rgba(90,90,90,.42)">Activate Windows</div>
<div class="t" style="left:1600px;top:972px;font-size:14.900px;letter-spacing:0;color:rgba(90,90,90,.42)">Go to Settings to activate Windows.</div>

<!-- status text -->
<div class="t w" style="left:29px;top:1021px">Ready</div>
<div class="t w" style="left:1730px;top:1021px">Add to Source Control</div>
<div class="t" style="left:1893px;top:1024px;color:#fff;font-size:10px;line-height:12px;letter-spacing:0">2</div>
</body></html>
